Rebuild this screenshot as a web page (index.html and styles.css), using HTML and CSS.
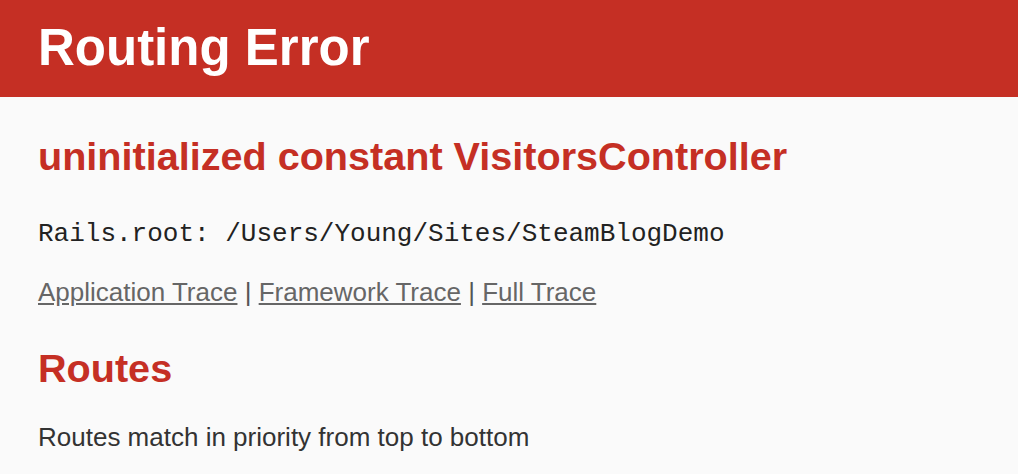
FILE: index.html
```html
<!DOCTYPE html>
<html lang="en">
<head>
    <meta charset="UTF-8">
    <title>Action Controller: Exception caught</title>
    <link rel="stylesheet" href="styles.css">
</head>
<body>
    <header class="header">
        <h1 class="title">Routing Error</h1>
    </header>

    <div class="content">
        <h2 class="error-message">uninitialized constant VisitorsController</h2>
        <p class="rails-root">Rails.root: /Users/Young/Sites/SteamBlogDemo</p>

        <div class="traces">
            <a href="#">Application Trace</a> |
            <a href="#">Framework Trace</a> |
            <a href="#">Full Trace</a>
        </div>

        <h2 class="section-title">Routes</h2>
        <p class="note">Routes match in priority from top to bottom</p>
    </div>
</body>
</html>
```

FILE: styles.css
```css
* {
    margin: 0;
    padding: 0;
    box-sizing: border-box;
}

body {
    width: 1018px;
    height: 474px;
    overflow: hidden;
    background: #fafafa;
    color: #333;
    font-family: "Liberation Sans", Arial, sans-serif;
    font-size: 26px;
    line-height: 1.2;
}

.header {
    background: #c52f24;
    padding: 17px 38px 19px;
}

.title {
    color: #fff;
    font-size: 51px;
    font-weight: 700;
    line-height: 61px;
}

.content {
    padding: 0 38px;
}

.error-message,
.section-title {
    color: #c52f24;
    font-size: 39.6px;
    font-weight: 700;
    line-height: 47.5px;
}

.error-message {
    margin-top: 35.5px;
}

.rails-root {
    font-family: "Liberation Mono", "Courier New", monospace;
    color: #222;
    margin-top: 38.5px;
}

.traces {
    margin-top: 27.7px;
    color: #555;
}

.traces a {
    color: #666;
}

.section-title {
    margin-top: 36px;
}

.note {
    margin-top: 30.4px;
}
```
